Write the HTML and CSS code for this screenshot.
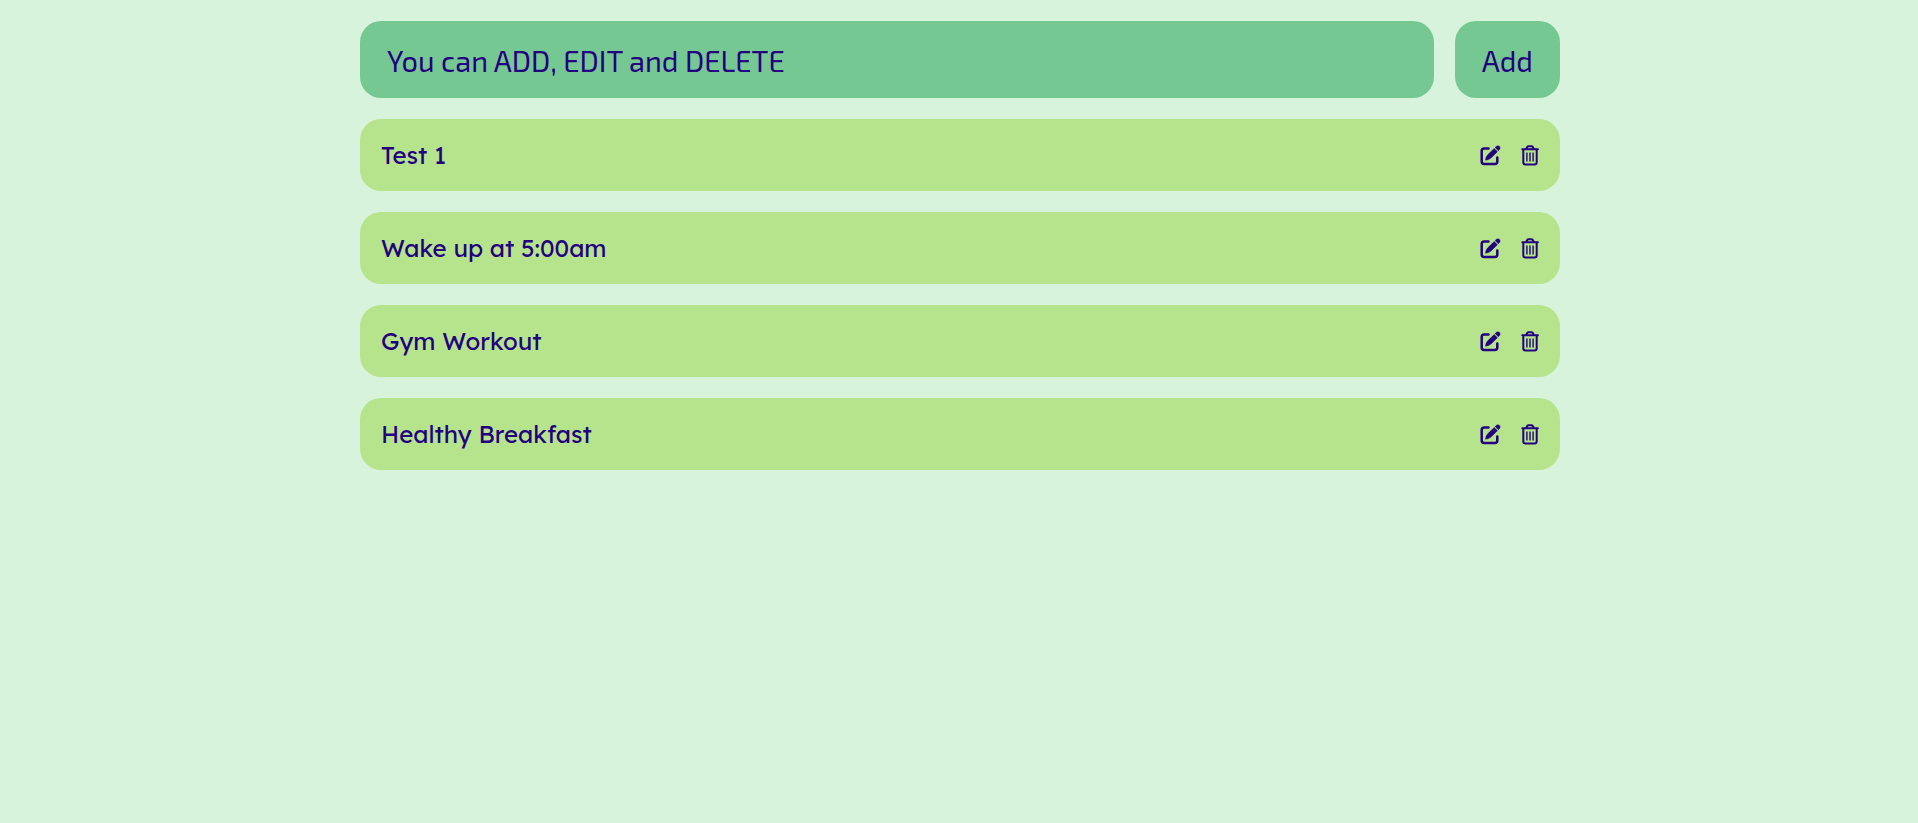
FILE: index.html
```html
<!DOCTYPE html>
<html lang="en">
<head>
<meta charset="utf-8">
<meta name="viewport" content="width=device-width, initial-scale=1">
<title>Todo List</title>
<link rel="stylesheet" href="styles.css">
</head>
<body>
<svg class="sprite" aria-hidden="true">
  <symbol id="icon-edit" viewBox="0 0 20 20" overflow="visible">
    <path d="M8.500 3.600H4.200Q1.700 3.600 1.700 6.100v10.400Q1.700 19 4.200 19h10.600q2.500 0 2.500-2.500V12.500" fill="none" stroke="currentColor" stroke-width="2.500" stroke-linecap="round"/>
    <path d="M14.200 3.500 17.400 6.700 11 13Q8.700 15.100 5.500 15.200 5.600 12 7.700 9.800ZM15.100 2.600 16.500 1.300Q18 .2 19.500 1.400 20.800 3 19.600 4.400L18.300 5.700Z" fill="currentColor" stroke="currentColor" stroke-width=".5" stroke-linejoin="round"/>
  </symbol>
  <symbol id="icon-trash" viewBox="0 0 20 20" overflow="visible">
    <path d="M3.300 4.300v13q0 2.300 2.300 2.300h8.800q2.300 0 2.300-2.300V4.300M2.300 4.300h15.600M6 4.200 7.200 2Q7.700 1.200 8.700 1.200h2.600Q12.300 1.200 12.800 2L14 4.200" fill="none" stroke="currentColor" stroke-width="2" stroke-linecap="round" stroke-linejoin="round"/>
    <path d="M6.900 7.600v9M10 7.600v9M13.100 7.600v9" fill="none" stroke="currentColor" stroke-width="1.400"/>
  </symbol>
</svg>
<main class="todo">
  <form class="todo-form">
    <input class="todo-input" type="text" aria-label="New todo" value="You can ADD, EDIT and DELETE">
    <button class="todo-add" type="button">Add</button>
  </form>
  <ul class="todo-list">
    <li class="todo-item">
      <span class="todo-text">Test 1</span>
      <button class="icon-button" type="button" aria-label="Edit Test 1"><svg class="icon"><use href="#icon-edit"/></svg></button>
      <button class="icon-button" type="button" aria-label="Delete Test 1"><svg class="icon"><use href="#icon-trash"/></svg></button>
    </li>
    <li class="todo-item">
      <span class="todo-text">Wake up at 5:00am</span>
      <button class="icon-button" type="button" aria-label="Edit Wake up at 5:00am"><svg class="icon"><use href="#icon-edit"/></svg></button>
      <button class="icon-button" type="button" aria-label="Delete Wake up at 5:00am"><svg class="icon"><use href="#icon-trash"/></svg></button>
    </li>
    <li class="todo-item">
      <span class="todo-text">Gym Workout</span>
      <button class="icon-button" type="button" aria-label="Edit Gym Workout"><svg class="icon"><use href="#icon-edit"/></svg></button>
      <button class="icon-button" type="button" aria-label="Delete Gym Workout"><svg class="icon"><use href="#icon-trash"/></svg></button>
    </li>
    <li class="todo-item">
      <span class="todo-text">Healthy Breakfast</span>
      <button class="icon-button" type="button" aria-label="Edit Healthy Breakfast"><svg class="icon"><use href="#icon-edit"/></svg></button>
      <button class="icon-button" type="button" aria-label="Delete Healthy Breakfast"><svg class="icon"><use href="#icon-trash"/></svg></button>
    </li>
  </ul>
</main>
</body>
</html>
```
FILE: styles.css
```css
* {
  box-sizing: border-box;
}

body {
  margin: 0;
  min-height: 100vh;
  padding-left: 2px;
  background: #d8f3dc;
  color: #240080;
}

.sprite {
  display: none;
}

.todo {
  max-width: 1200px;
  margin: 0 auto;
  padding: 21px 0;
}

.todo-form {
  display: flex;
  gap: 21px;
  margin-bottom: 21px;
}

.todo-input,
.todo-add {
  padding: 22px 27px 20px;
  border: 0;
  border-radius: 21px;
  background: #76c893;
  color: inherit;
  font-family: "Exo 2", Roboto, sans-serif;
  font-size: 29px;
  line-height: 35px;
}

.todo-input {
  flex: 1;
  min-width: 0;
}

.todo-add {
  cursor: pointer;
}

.todo-list {
  display: grid;
  gap: 21px;
  margin: 0;
  padding: 0;
  list-style: none;
}

.todo-item {
  display: flex;
  align-items: center;
  gap: 20px;
  padding: 20px;
  border-radius: 21px;
  background: #b5e48c;
}

.todo-text {
  flex: 1;
  padding-left: 1px;
  font-family: Lexend, Inter, sans-serif;
  font-size: 24px;
  line-height: 32px;
}

.icon-button {
  display: flex;
  padding: 0;
  border: 0;
  background: none;
  color: inherit;
  cursor: pointer;
}

.icon {
  width: 20px;
  height: 20px;
  overflow: visible;
}
```
